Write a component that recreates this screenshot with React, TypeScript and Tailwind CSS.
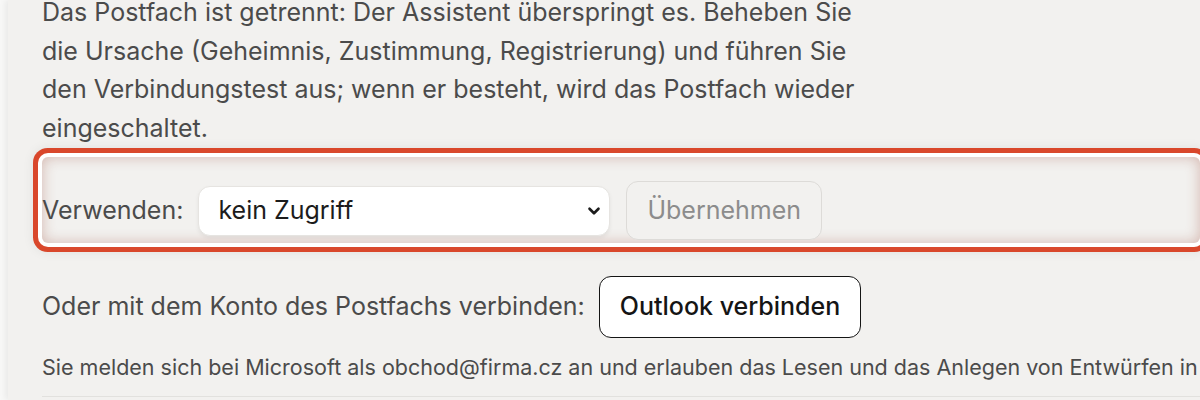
import { ChevronDown } from "lucide-react";

const font = { fontFamily: "Inter, 'Noto Sans', sans-serif" };

// Highlighted row: the select is focused via a ring around its row
function AccessRow() {
    return (
        <div className="mt-[10px] h-[86px] rounded-md bg-[#f2f1ef] ring-5 ring-[#d9472b] ring-offset-4 ring-offset-white shadow-[0_0_12px_9px_rgba(0,0,0,0.07)] inset-shadow-[0_0_14px_rgba(150,60,40,0.32)] flex items-end pb-[3px]">
            <div className="flex items-center">
                <span className="text-[25px] text-[#4b4b4b]">Verwenden:</span>
                <div className="relative ml-[15px] w-[412px]">
                    <select
                        defaultValue="none"
                        className="appearance-none w-full h-[50px] rounded-xl bg-white border border-[#e6e4e1] shadow-[0_2px_4px_rgba(0,0,0,0.06)] pl-[19px] pr-10 text-[25px] text-[#1c1c1c] outline-none"
                        style={font}
                    >
                        <option value="none">kein Zugriff</option>
                        <option value="read">Lesen</option>
                        <option value="draft">Entwürfe anlegen</option>
                    </select>
                    <ChevronDown className="absolute right-[7px] top-[16px] w-[18px] h-[18px] text-[#1c1c1c] pointer-events-none" strokeWidth={3.5} />
                </div>
                <button
                    disabled
                    className="ml-[16px] h-[59px] px-[20px] rounded-xl border border-[#dddbd8] bg-[#f2f1ef] text-[25px] text-[#8c8c8c]"
                    style={font}
                >
                    Übernehmen
                </button>
            </div>
        </div>
    );
}

export default function App() {
    return (
        <div className="w-[1200px] h-[400px] overflow-hidden bg-[#f8f8f7]" style={font}>
            <div className="ml-[8px] h-full bg-[#f2f1ef] shadow-[-3px_0_6px_rgba(0,0,0,0.06)] pl-[34px] overflow-hidden">
                <p className="-mt-[7px] max-w-[830px] text-[25px] leading-[38.5px] text-[#4b4b4b]">
                    Das Postfach ist getrennt: Der Assistent überspringt es. Beheben Sie die Ursache (Geheimnis, Zustimmung, Registrierung) und führen Sie den Verbindungstest aus; wenn er besteht, wird das Postfach wieder eingeschaltet.
                </p>

                <AccessRow />

                <div className="mt-[33px] flex items-center">
                    <span className="text-[25px] text-[#4b4b4b]">Oder mit dem Konto des Postfachs verbinden:</span>
                    <button className="ml-[14px] h-[62px] px-[20px] rounded-xl border-[1.5px] border-[#151515] bg-white text-[25px] font-medium text-[#151515]">
                        Outlook verbinden
                    </button>
                </div>

                <p className="mt-[15px] whitespace-nowrap text-[21.5px] leading-[28px] text-[#4b4b4b]">
                    Sie melden sich bei Microsoft als obchod@firma.cz an und erlauben das Lesen und das Anlegen von Entwürfen in diesem Postfach.
                </p>

                <div className="mt-[15px] border-t border-[#e2e1de]" />
            </div>
        </div>
    );
}
